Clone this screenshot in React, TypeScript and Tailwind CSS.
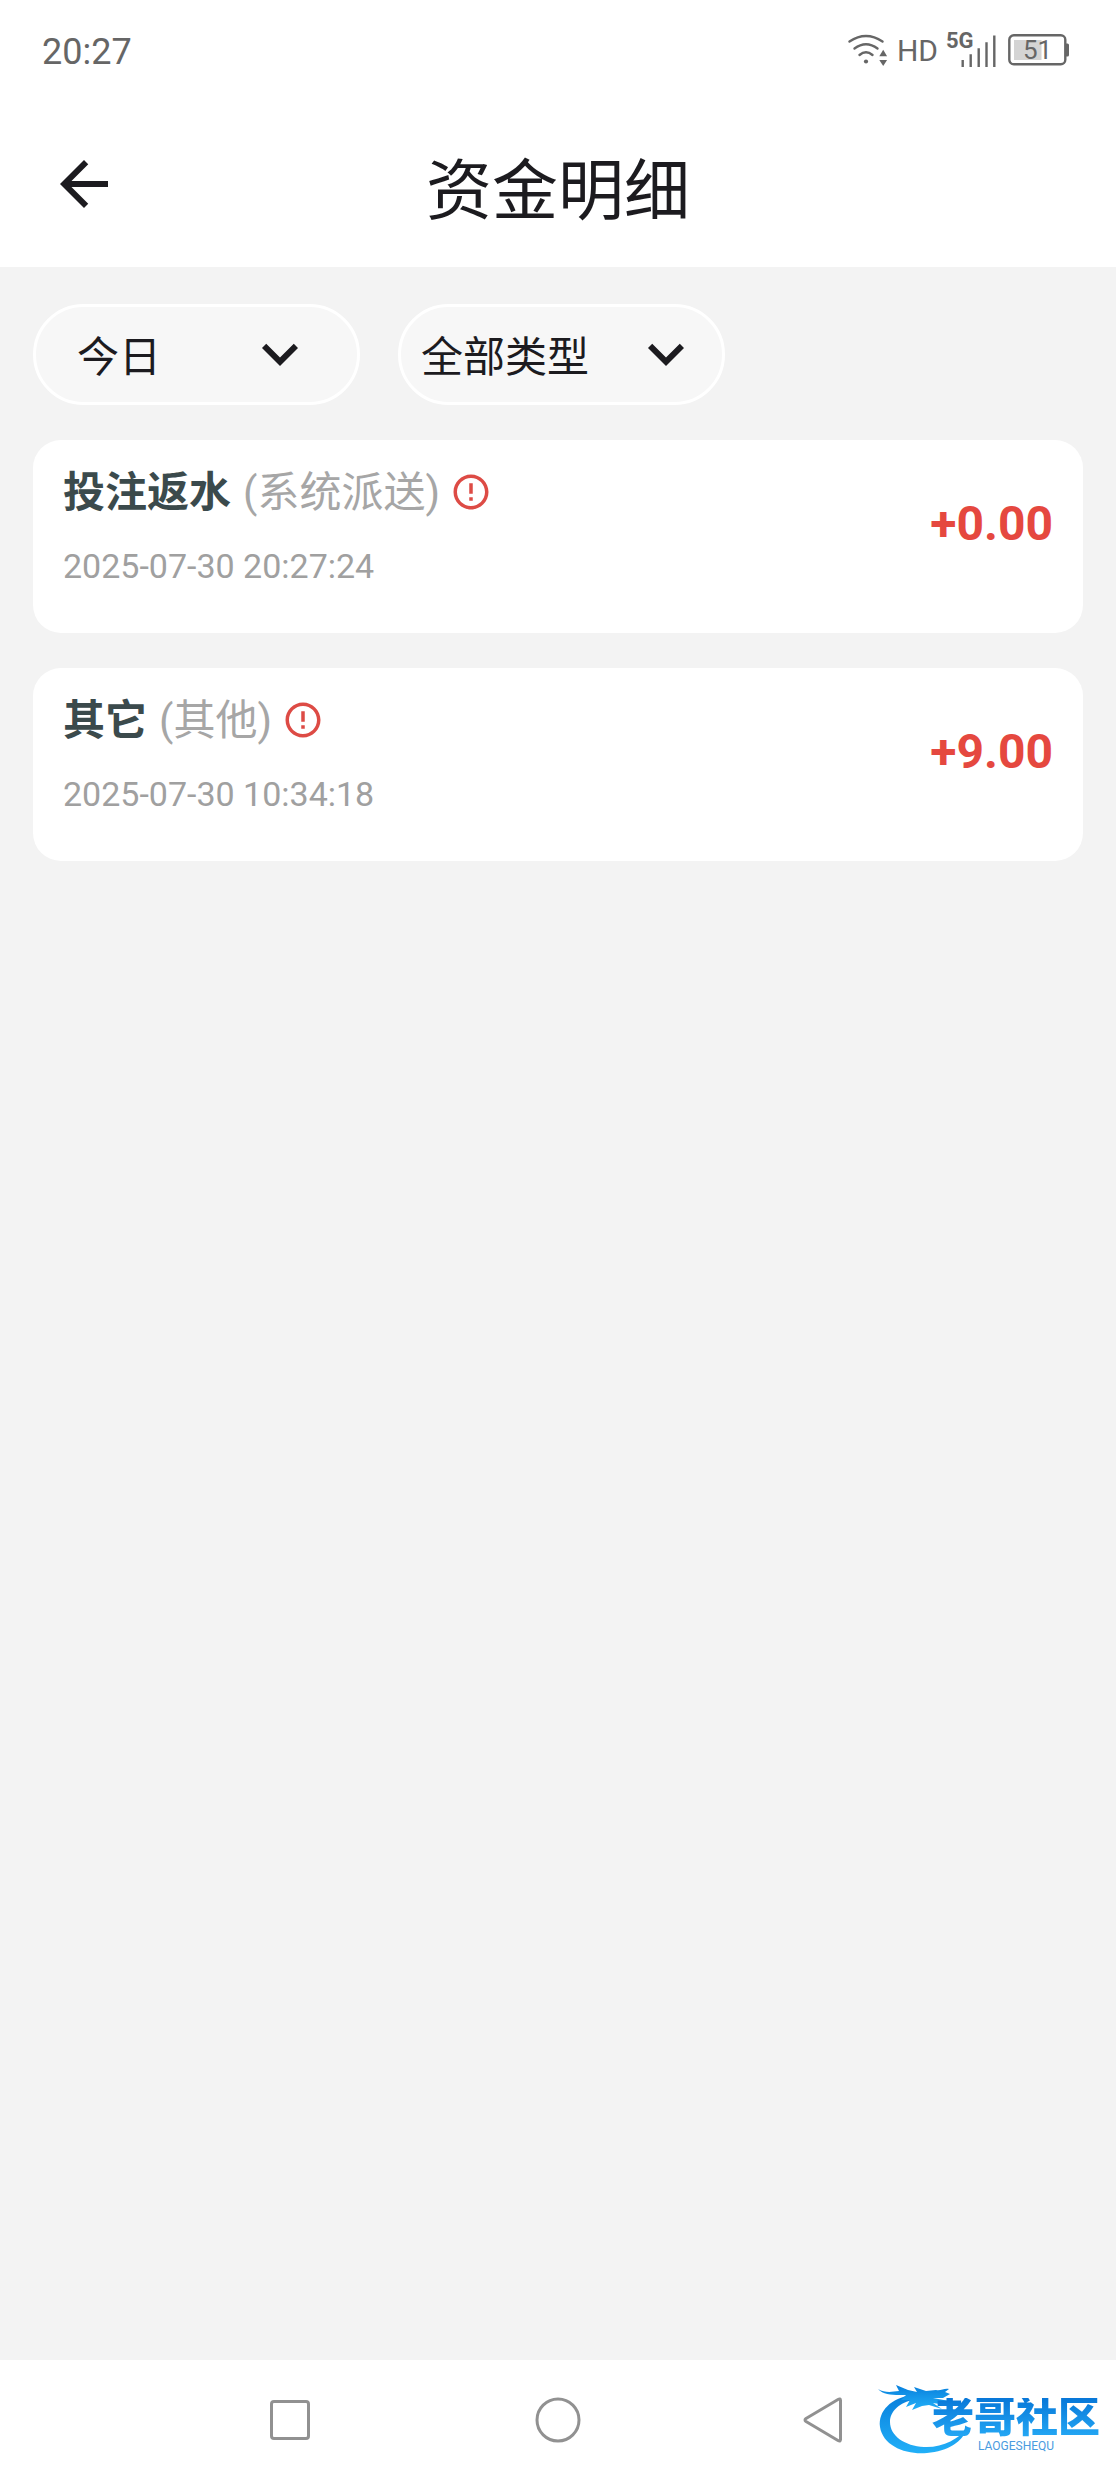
import { useState } from 'react';

type FundRecord = {
  id: number;
  title: string;
  source: string;
  time: string;
  amount: string;
};

const records: FundRecord[] = [
  { id: 1, title: '投注返水', source: '系统派送', time: '2025-07-30 20:27:24', amount: '+0.00' },
  { id: 2, title: '其它', source: '其他', time: '2025-07-30 10:34:18', amount: '+9.00' },
];

function WifiIcon() {
  return (
    <svg width="42" height="34" viewBox="0 0 42 34" fill="none" stroke="#666" strokeWidth="2.4" strokeLinecap="round" aria-hidden="true">
      <path d="M2.5 8.5Q19 -2.5 35.5 8.5" />
      <path d="M7.5 15.5Q19 7 30.5 15.5" />
      <path d="M12.5 22Q19 16.5 25.5 22" />
      <circle cx="19" cy="28.5" r="2.1" fill="#666" stroke="none" />
      <path d="M32.3 23.3L36.2 16.7L40.1 23.3Z" fill="#666" stroke="none" />
      <path d="M32.3 27L36.2 33L40.1 27Z" fill="#666" stroke="none" />
    </svg>
  );
}

function SignalIcon() {
  return (
    <svg width="50" height="48" viewBox="0 -6 50 48" role="img" aria-label="5G">
      <text x="0" y="16" fontSize="22" fontWeight="700" fill="#666">5G</text>
      <path d="M16.7 28V35M24.7 22.3V35M32.7 16.3V35M40.5 10.3V35M48.3 3.5V35" stroke="#666" strokeWidth="2.4" />
    </svg>
  );
}

function BatteryIcon() {
  return (
    <svg width="62" height="32" viewBox="0 0 62 32" role="img" aria-label="51%">
      <rect x="6" y="6" width="27.5" height="20" fill="#d4d4d4" />
      <rect x="1.3" y="1.3" width="56" height="29" rx="4.5" fill="none" stroke="#666" strokeWidth="2.4" />
      <path d="M58 9.5h1.500q1.500 0 1.500 1.500v10q0 1.500-1.500 1.500H58z" fill="#666" />
      <text x="15" y="25" fontSize="26" fill="#666">51</text>
    </svg>
  );
}

function StatusBar() {
  return (
    <div className="flex h-25 items-center justify-between pl-[42px] pr-[46px] text-[#666]">
      <span className="pt-1 text-4xl">20:27</span>
      <div className="flex items-center">
        <WifiIcon />
        <span className="ml-2 text-[30px]">HD</span>
        <div className="ml-2 flex items-center gap-3">
          <SignalIcon />
          <BatteryIcon />
        </div>
      </div>
    </div>
  );
}

type FilterProps = {
  label: string;
  options: string[];
  selectClass: string;
  iconClass: string;
};

function Filter({ label, options, selectClass, iconClass }: FilterProps) {
  const [value, setValue] = useState(options[0]);

  return (
    <div className="relative w-[327px]">
      <select
        aria-label={label}
        value={value}
        onChange={(e) => setValue(e.target.value)}
        className={`h-[101px] w-full appearance-none rounded-full border-3 border-white bg-[#f7f7f7] pt-[6px] text-[42px] text-[#1c1b1f] outline-none ${selectClass}`}
      >
        {options.map((option) => (
          <option key={option} value={option}>
            {option}
          </option>
        ))}
      </select>
      <svg
        viewBox="0 0 24 24"
        fill="#1c1b1f"
        aria-hidden="true"
        className={`pointer-events-none absolute top-[14px] size-18 ${iconClass}`}
      >
        <path d="M7.41 8.59 12 13.17l4.59-4.58L18 10l-6 6-6-6z" />
      </svg>
    </div>
  );
}

function RecordCard({ record }: { record: FundRecord }) {
  return (
    <li className="flex h-[193px] items-start justify-between rounded-[28px] bg-white px-[30px] pt-[22px]">
      <div>
        <div className="flex h-15 items-center">
          <h2 className="text-[42px] font-bold text-[#3b4a4c]">{record.title}</h2>
          <span className="ml-3 text-[42px] text-[#a6a6a6]">({record.source})</span>
          <button type="button" aria-label="详情" className="ml-[10px]">
            <svg viewBox="0 0 24 24" fill="#dd4b45" aria-hidden="true" className="size-[42px]">
              <path d="M11 15h2v2h-2zm0-8h2v6h-2zm.99-5C6.47 2 2 6.48 2 12s4.47 10 9.99 10C17.52 22 22 17.52 22 12S17.52 2 11.99 2zM12 20c-4.42 0-8-3.58-8-8s3.58-8 8-8 8 3.58 8 8-3.58 8-8 8z" />
            </svg>
          </button>
        </div>
        <time className="mt-5 block text-[34px] leading-12 text-[#a0a0a0]">{record.time}</time>
      </div>
      <span className="pt-[38px] text-5xl font-bold text-[#e5483f]">{record.amount}</span>
    </li>
  );
}

function CommunityLogo() {
  return (
    <div className="absolute right-4 bottom-6 flex h-[74px] w-[224px] justify-end">
      <svg viewBox="0 0 224 74" className="absolute inset-0" aria-hidden="true">
        <defs>
          <linearGradient id="dragon" x1="0" y1="0" x2="0" y2="1">
            <stop offset="0" stopColor="#087fdc" />
            <stop offset="1" stopColor="#22b0f8" />
          </linearGradient>
        </defs>
        <g fill="url(#dragon)">
          {/* body */}
          <path d="M36 13C15 16 2 29 4 45C7 64 30 73 51 71C72 69 87 60 91 46C83 57 66 66 48 65C29 64 14 54 14 40C14 29 24 20 38 18Z" />
          {/* head, horns and whiskers */}
          <path d="M2 7C9 11 15 10 23 9L20 3L32 8L41 10L38 5L50 9L60 8C65 9 68 6 73 7L69 10L74 12L67 16L57 16L73 19L70 23L57 21L66 27L53 23L46 24L36 28L40 21L30 25L34 18L25 18L30 13C20 13 8 14 2 7Z" />
        </g>
      </svg>
      <div className="relative flex flex-col items-center pt-4">
        <span className="bg-linear-to-b from-[#0877d8] to-[#25a9f5] bg-clip-text text-[42px] leading-10 font-black text-transparent">
          老哥社区
        </span>
        <span className="mt-[2px] text-[12px] leading-3 text-[#4a9be0]">LAOGESHEQU</span>
      </div>
    </div>
  );
}

export default function App() {
  return (
    <div className="flex min-h-screen flex-col bg-[#f3f3f3] font-['Roboto','Noto_Sans_CJK_SC',sans-serif]">
      <div className="bg-white">
        <StatusBar />
        <header className="grid h-[167px] grid-cols-[72px_1fr_72px] items-center px-12">
          <button type="button" aria-label="返回">
            <svg viewBox="0 0 24 24" fill="#1c1b1f" aria-hidden="true" className="size-18">
              <path d="M20 11H7.83l5.59-5.59L12 4l-8 8 8 8 1.41-1.41L7.83 13H20z" />
            </svg>
          </button>
          <h1 className="pt-4 text-center text-[66px] text-[#1c1b1f]">资金明细</h1>
        </header>
      </div>

      <main className="flex-1 px-[33px] pt-[37px]">
        {/* Filters */}
        <div className="flex gap-[38px]">
          <Filter label="日期" options={['今日', '昨日']} selectClass="pl-[41px]" iconClass="right-11" />
          <Filter label="类型" options={['全部类型', '投注返水', '其它']} selectClass="pl-[20px]" iconClass="right-[23px]" />
        </div>

        {/* Records */}
        <ul className="mt-[35px] space-y-[35px]">
          {records.map((record) => (
            <RecordCard key={record.id} record={record} />
          ))}
        </ul>
      </main>

      <nav className="relative flex h-30 bg-white px-[14%]">
        <button type="button" aria-label="最近任务" className="flex flex-1 items-center justify-center">
          <svg width="48" height="48" viewBox="0 0 48 48" fill="none" stroke="#919191" strokeWidth="3" aria-hidden="true">
            <rect x="5.5" y="5.5" width="37" height="37" rx="2.5" />
          </svg>
        </button>
        <button type="button" aria-label="主页" className="flex flex-1 items-center justify-center">
          <svg width="48" height="48" viewBox="0 0 48 48" fill="none" stroke="#919191" strokeWidth="3" aria-hidden="true">
            <circle cx="24" cy="24" r="21" />
          </svg>
        </button>
        <button type="button" aria-label="后退" className="flex flex-1 items-center justify-center">
          <svg width="48" height="48" viewBox="0 0 48 48" fill="none" stroke="#919191" strokeWidth="3" strokeLinejoin="round" aria-hidden="true">
            <path d="M36 3.5Q38.500 2 38.500 4.500V43.500Q38.500 46 36 44.500L4 25.500Q2 24 4 22.500Z" />
          </svg>
        </button>
        <CommunityLogo />
      </nav>
    </div>
  );
}
